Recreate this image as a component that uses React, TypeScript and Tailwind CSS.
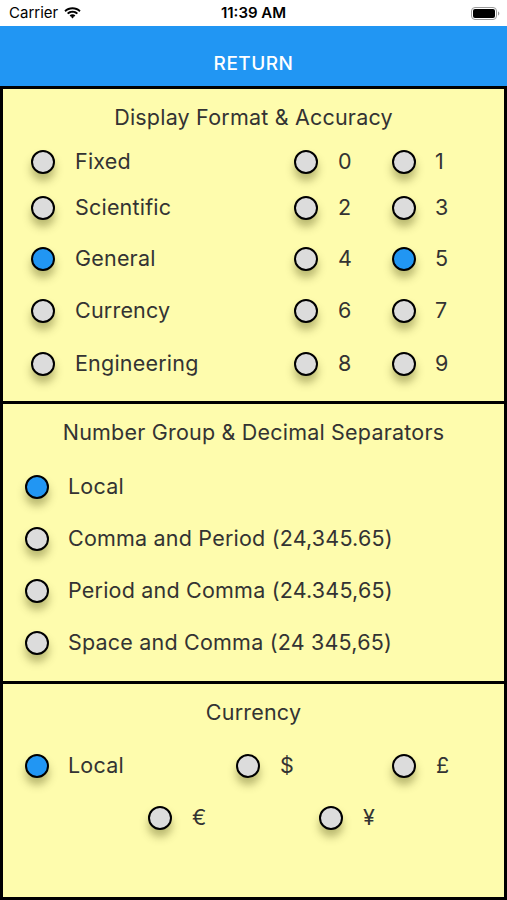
import type { ReactNode } from "react";

function Radio({ on = false }: { on?: boolean }) {
  return (
    <span
      className={
        "block h-[24px] w-[24px] shrink-0 rounded-full border-2 border-black shadow-[0_7px_9px_rgba(60,60,0,0.35)] " +
        (on ? "bg-[#2196f3]" : "bg-[#dcdcdc]")
      }
    />
  );
}

function Option({ label, on, gap = "gap-[20px]" }: { label: string; on?: boolean; gap?: string }) {
  return (
    <div className={"flex items-center " + gap}>
      <Radio on={on} />
      <span className="text-[21.5px] leading-none tracking-[0.2px] text-[#333]">{label}</span>
    </div>
  );
}

function Panel({ title, children, last, top = "mt-[14px]" }: { title: string; children: ReactNode; last?: boolean; top?: string }) {
  return (
    <section
      className={
        "border-x-[3px] border-t-[3px] border-black bg-[#fefcad] " + (last ? "border-b-[3px] flex-1" : "")
      }
    >
      <h2 className={"text-center text-[21.5px] leading-[28px] tracking-[0.2px] text-[#333] " + top}>{title}</h2>
      {children}
    </section>
  );
}

function StatusBar() {
  return (
    <div className="relative flex h-[26px] items-center bg-white px-[9px] text-[15px] text-black">
      <span>Carrier</span>
      <svg className="ml-[6px]" width="17" height="12" viewBox="0 0 17 12">
        <path d="M8.5 2.2c2.6 0 5 1 6.8 2.7l1.3-1.4C14.4 1.5 11.6.3 8.5.3S2.6 1.5.4 3.5l1.3 1.4C3.5 3.2 5.9 2.2 8.5 2.2z" fill="#000" />
        <path d="M8.5 5.7c1.6 0 3.1.6 4.2 1.6l1.3-1.4c-1.5-1.3-3.4-2.1-5.5-2.1S4.5 4.6 3 5.9l1.3 1.4c1.1-1 2.6-1.6 4.2-1.6z" fill="#000" />
        <path d="M8.5 9.1c.6 0 1.2.2 1.6.6L8.5 11.5 6.9 9.7c.4-.4 1-.6 1.6-.6z" fill="#000" />
        <path d="M8.5 7.3c1.1 0 2.1.4 2.9 1.1l-1.3 1.4c-.4-.4-1-.6-1.6-.6s-1.2.2-1.6.6L5.6 8.4c.8-.7 1.8-1.1 2.9-1.1z" fill="#000" />
      </svg>
      <span className="absolute left-1/2 -translate-x-1/2 font-semibold">11:39 AM</span>
      <svg className="ml-auto mr-[-2px]" width="29" height="13" viewBox="0 0 29 13">
        <rect x="0.5" y="0.5" width="25" height="12" rx="3.5" fill="none" stroke="#999" />
        <rect x="2" y="2" width="22" height="9" rx="2" fill="#000" />
        <path d="M27 4.5v4c.8-.3 1.3-1.1 1.3-2s-.5-1.7-1.3-2z" fill="#999" />
      </svg>
    </div>
  );
}

export default function App() {
  return (
    <div className="flex h-[900px] w-[507px] flex-col overflow-hidden bg-white font-['Inter','Noto_Sans',sans-serif]">
      <StatusBar />
      <div className="flex h-[60px] items-center justify-center bg-[#2196f3] pt-[17px] text-[19px] font-medium tracking-wide text-white">
        RETURN
      </div>

      <Panel title="Display Format & Accuracy">
        <div className="mt-[9px] grid grid-cols-[291px_98px_1fr] grid-rows-[44px_48px_53px_52px_53px] pb-[11px]">
          {[
            ["Fixed", "0", "1"],
            ["Scientific", "2", "3"],
            ["General", "4", "5"],
            ["Currency", "6", "7"],
            ["Engineering", "8", "9"],
          ].map(([name, a, b]) => (
            <div key={name} className="contents">
              <div className="flex items-center pl-[28px]">
                <Option label={name} on={name === "General"} />
              </div>
              <div className="flex items-center">
                <Option label={a} />
              </div>
              <div className="flex items-center">
                <Option label={b} on={b === "5"} gap="gap-[19px]" />
              </div>
            </div>
          ))}
        </div>
      </Panel>

      <Panel title="Number Group & Decimal Separators" top="mt-[14px]">
        <div className="mt-[15px] flex flex-col pb-[12px] pl-[22px]">
          {[
            ["Local", true],
            ["Comma and Period (24,345.65)", false],
            ["Period and Comma (24.345,65)", false],
            ["Space and Comma (24 345,65)", false],
          ].map(([label, on]) => (
            <div key={label as string} className="flex h-[52px] items-center">
              <Option label={label as string} on={on as boolean} gap="gap-[19px]" />
            </div>
          ))}
        </div>
      </Panel>

      <Panel title="Currency" last top="mt-[14px]">
        <div className="mt-[14px] flex h-[52px] items-center pl-[22px]">
          <div className="w-[211px]">
            <Option label="Local" on gap="gap-[19px]" />
          </div>
          <div className="w-[156px]">
            <Option label="$" gap="gap-[20px]" />
          </div>
          <Option label="£" gap="gap-[20px]" />
        </div>
        <div className="flex h-[52px] items-center pl-[145px]">
          <div className="w-[171px]">
            <Option label="€" gap="gap-[20px]" />
          </div>
          <Option label="¥" gap="gap-[20px]" />
        </div>
      </Panel>
    </div>
  );
}
